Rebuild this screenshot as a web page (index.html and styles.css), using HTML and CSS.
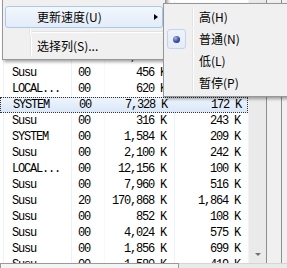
FILE: index.html
```html
<!DOCTYPE html>
<html>
<head>
<meta charset="UTF-8">
<title>任务管理器</title>
<link rel="stylesheet" href="styles.css">
</head>
<body>
  <div class="screen">
    <div class="view">
      <div class="list">
        <div class="row"><span></span><span>Susu</span><span>00</span><span>1,204 K</span><span>310 K</span></div>
        <div class="row"><span></span><span>Susu</span><span>00</span><span>988 K</span><span>220 K</span></div>
        <div class="row"><span></span><span>SYSTEM</span><span>00</span><span>540 K</span><span>128 K</span></div>
        <div class="row"><span></span><span>Susu</span><span>00</span><span>3,412 K</span><span>301 K</span></div>
        <div class="row"><span></span><span>Susu</span><span>00</span><span>456 K</span><span>131 K</span></div>
        <div class="row"><span></span><span>LOCAL...</span><span>00</span><span>620 K</span><span>150 K</span></div>
        <div class="row sel"><span></span><span>SYSTEM</span><span>00</span><span>7,328 K</span><span>172 K</span></div>
        <div class="row"><span></span><span>Susu</span><span>00</span><span>316 K</span><span>243 K</span></div>
        <div class="row"><span></span><span>SYSTEM</span><span>00</span><span>1,584 K</span><span>209 K</span></div>
        <div class="row"><span></span><span>Susu</span><span>00</span><span>2,100 K</span><span>242 K</span></div>
        <div class="row"><span></span><span>LOCAL...</span><span>00</span><span>12,156 K</span><span>100 K</span></div>
        <div class="row"><span></span><span>Susu</span><span>00</span><span>7,960 K</span><span>516 K</span></div>
        <div class="row"><span></span><span>Susu</span><span>20</span><span>170,868 K</span><span>1,864 K</span></div>
        <div class="row"><span></span><span>Susu</span><span>00</span><span>852 K</span><span>108 K</span></div>
        <div class="row"><span></span><span>Susu</span><span>00</span><span>4,024 K</span><span>575 K</span></div>
        <div class="row"><span></span><span>Susu</span><span>00</span><span>1,856 K</span><span>699 K</span></div>
        <div class="row"><span></span><span>Susu</span><span>00</span><span>1,580 K</span><span>419 K</span></div>
      </div>
      <div class="vscroll"><div class="btn-down"><span class="tri-down"></span></div></div>
      <div class="frame"></div>
    </div>
    <div class="hscroll"><div class="thumb"></div></div>

    <div class="menu main-menu">
      <div class="item hot"><span class="gut"></span><span class="label">更新速度(U)</span><span class="tri-right"></span></div>
      <div class="sep"><span class="gut"></span><span class="line"></span></div>
      <div class="item"><span class="gut"></span><span class="label">选择列(S)...</span></div>
    </div>

    <div class="menu sub-menu">
      <div class="item"><span class="gut"></span><span class="label">高(H)</span></div>
      <div class="item"><span class="gut"><span class="check"><span class="dot"></span></span></span><span class="label">普通(N)</span></div>
      <div class="item"><span class="gut"></span><span class="label">低(L)</span></div>
      <div class="item"><span class="gut"></span><span class="label">暂停(P)</span></div>
    </div>
  </div>
</body>
</html>
```

FILE: styles.css
```css
body {
  margin: 0;
  background: #fff;
  overflow: hidden;
}
.screen {
  position: relative;
  width: 287px;
  height: 268px;
  overflow: hidden;
}

/* list behind the menus */
.view {
  display: flex;
  height: 263px;
}
.list {
  width: 248px;
  padding-top: 1px;
  overflow: hidden;
  font-family: "Liberation Mono", monospace;
  font-size: 12px;
  letter-spacing: -1.2px;
  color: #000;
}
.row {
  display: grid;
  grid-template-columns: 4px 68px 33px 70px 73px;
  height: 16px;
  line-height: 16px;
  box-sizing: border-box;
}
.row span {
  border-right: 1px solid #eef1f5;
  white-space: nowrap;
  overflow: hidden;
}
.row span:nth-child(3) { border-right-color: #f7f8fa; }
.row span:nth-child(2) { padding-left: 8px; }
.row span:nth-child(3) { padding-left: 6px; }
.row span:nth-child(4),
.row span:nth-child(5) { text-align: right; padding-right: 8px; }
.row span:nth-child(5) { border-right: none; }
.row.sel {
  border: 1px dotted #333;
  line-height: 14px;
  background: linear-gradient(#eef4fc, #d9e7f8);
}
.row.sel span { border-right-color: transparent; }

.vscroll {
  width: 17px;
  background: #eaeaea;
  border-left: 1px solid #f4f4f4;
  display: flex;
  flex-direction: column;
  justify-content: flex-end;
}
.btn-down {
  height: 17px;
  display: flex;
  align-items: center;
  justify-content: center;
}
.tri-down {
  width: 0;
  height: 0;
  border-left: 3px solid transparent;
  border-right: 3px solid transparent;
  border-top: 3px solid #707070;
}
.frame {
  flex: 1;
  background: #f0f0f0;
  border-left: 1px solid #8e8f8f;
  position: relative;
}
.frame::after {
  content: "";
  position: absolute;
  left: 14px;
  top: 0;
  bottom: 0;
  border-left: 1px solid #8e8f8f;
}
.hscroll {
  height: 5px;
  background: #eaeaea;
  border-top: 1px solid #d6d6d6;
}
.hscroll .thumb {
  width: 177px;
  height: 5px;
  border: 1px solid #9a9a9a;
  border-bottom: none;
  background: #f4f4f4;
  margin-top: -1px;
}

/* context menus */
.menu {
  position: absolute;
  background: #f0f0f0;
  border: 1px solid #979797;
  padding: 2px;
  box-shadow: 2px 2px 3px rgba(0, 0, 0, 0.35);
  font-family: "Noto Sans CJK SC", "Liberation Sans", sans-serif;
  font-size: 12px;
  color: #000;
}
.main-menu {
  left: 2px;
  top: -6px;
  padding-top: 11px;
  width: 158px;
}
.sub-menu {
  left: 163px;
  top: 3px;
  width: 140px;
}
.item {
  display: flex;
  align-items: center;
  height: 22px;
  line-height: 22px;
  position: relative;
  border: 1px solid transparent;
  box-sizing: border-box;
  border-radius: 3px;
}
.item.hot {
  border-color: #a9c9ef;
  background: linear-gradient(#f3f7fc, #e3ecf8);
}
.gut {
  width: 24px;
  align-self: stretch;
  margin-right: 6px;
  border-right: 1px solid #e2e3e3;
  box-shadow: 1px 0 0 #fff;
  display: flex;
  align-items: center;
}
.item.hot .gut {
  border-right-color: transparent;
  box-shadow: none;
}
.sub-menu .gut { width: 25px; }
.label {
  white-space: nowrap;
}
.tri-right {
  position: absolute;
  right: 4px;
  top: 7px;
  width: 0;
  height: 0;
  border-top: 3.5px solid transparent;
  border-bottom: 3.5px solid transparent;
  border-left: 4px solid #000;
}
.sep {
  display: flex;
  height: 7px;
}
.sep .gut {
  margin-right: 2px;
}
.sep .line {
  flex: 1;
  height: 0;
  margin-top: 3px;
  border-top: 1px solid #e2e3e3;
  border-bottom: 1px solid #fff;
}
.check {
  width: 19px;
  height: 20px;
  box-sizing: border-box;
  border: 1px solid #c2d5ec;
  border-radius: 3px;
  background: linear-gradient(#eef3fa, #e4ecf7);
  display: flex;
  align-items: center;
  justify-content: center;
}
.dot {
  width: 7px;
  height: 7px;
  border-radius: 50%;
  background: radial-gradient(circle at 35% 30%, #a8b4e6, #3a4ba6 55%, #1d2c7a);
}
```
